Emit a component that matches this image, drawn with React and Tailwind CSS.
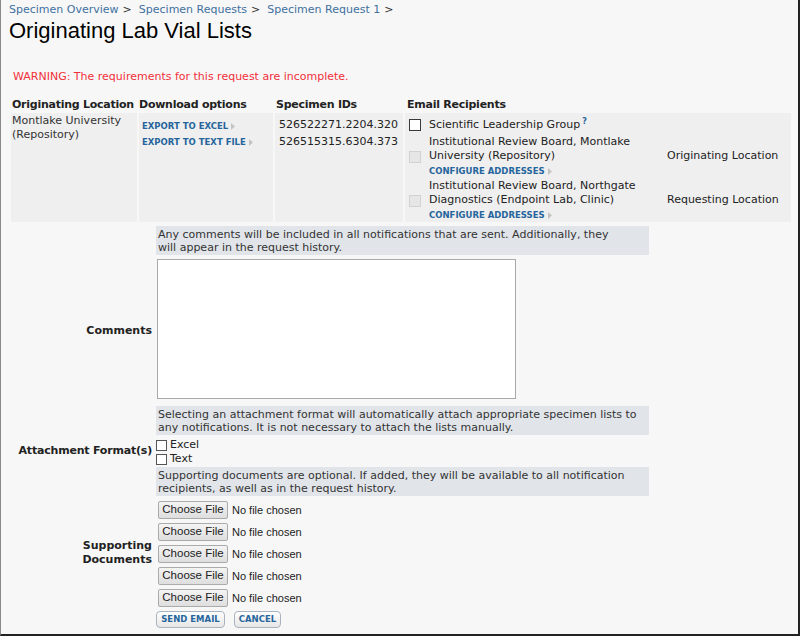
import React from "react";

const Arrow = () => (
  <svg width="4" height="7" viewBox="0 0 4 7" className="inline-block ml-[3px]">
    <path d="M0 0 L4 3.5 L0 7 Z" fill="#c4c4c4" />
  </svg>
);

const SmallLink = ({ children }) => (
  <span className="text-[8.5px] font-bold uppercase text-[#25659c] whitespace-nowrap">
    {children}
    <Arrow />
  </span>
);

const Box = ({ disabled }) => (
  <span
    className={`inline-block w-[12px] h-[12px] border ${
      disabled ? "bg-[#e6e6e6] border-[#d2d2d2]" : "bg-white border-[#3a3a3a]"
    }`}
  />
);

const Help = ({ children }) => (
  <div className="w-[493px] bg-[#e1e5e9] text-[#333] leading-[13px] pt-[2px] pb-[1px] pl-[2px] whitespace-nowrap">
    {children}
  </div>
);

const FileRow = () => (
  <div className="h-[22px] flex items-center">
    <div className="ml-[2px] w-[70px] h-[18px] flex items-center justify-center border border-[#aaa] rounded-[2px] bg-gradient-to-b from-[#f4f4f4] to-[#dedede] font-['Liberation_Sans',Arial,sans-serif] text-[11.5px] text-[#222]">
      Choose File
    </div>
    <span className="ml-[4px] font-['Liberation_Sans',Arial,sans-serif] text-[11px] text-[#222]">
      No file chosen
    </span>
  </div>
);

const Recipient = ({ lines, location, disabled, configure }) => (
  <div className="flex items-center">
    <div className="w-[24px] pl-[4px] flex items-center">
      <Box disabled={disabled} />
    </div>
    <div className="w-[238px] leading-[14px]">
      {lines.map((l, i) => (
        <div key={i} className="whitespace-nowrap">
          {l}
        </div>
      ))}
      {configure && (
        <div className="leading-[13px] mt-[1px]">
          <SmallLink>Configure Addresses</SmallLink>
        </div>
      )}
    </div>
    <div className="whitespace-nowrap">{location}</div>
  </div>
);

export default function App() {
  return (
    <div className="w-[800px] h-[636px] overflow-hidden bg-[#f7f7f7] border-l border-l-[#8a8a8a] border-r-2 border-r-[#222] border-b-2 border-b-[#222] text-[11px] text-[#222] font-['DejaVu_Sans',Verdana,sans-serif]">
      <div className="pl-[8px] pt-[3px] leading-[14px] flex whitespace-nowrap text-[#41709f]">
        <span>Specimen Overview</span>
        <span className="text-[#333] ml-[4px] mr-[7px]">&gt;</span>
        <span>Specimen Requests</span>
        <span className="text-[#333] ml-[4px] mr-[7px]">&gt;</span>
        <span>Specimen Request 1</span>
        <span className="text-[#333] ml-[4px]">&gt;</span>
      </div>
      <h1 className="pl-[8px] mt-[2px] text-[22px] leading-[24px] font-['Liberation_Sans',Arial,sans-serif] text-black">
        Originating Lab Vial Lists
      </h1>
      <div className="pl-[12px] mt-[27px] leading-[14px] text-[#f2303a]">
        WARNING: The requirements for this request are incomplete.
      </div>

      {/* request summary */}
      <div className="ml-[10px] mt-[14px] w-[780px]">
        <div className="grid grid-cols-[126px_134px_128px_386px] gap-x-[2px] font-bold leading-[14px] whitespace-nowrap tracking-[-0.25px]">
          <div className="pl-[1px]">Originating Location</div>
          <div>Download options</div>
          <div className="pl-[1px]">Specimen IDs</div>
          <div className="pl-[2px]">Email Recipients</div>
        </div>
        <div className="mt-[1px] h-[107px] grid grid-cols-[126px_134px_128px_386px] gap-x-[2px]">
          <div className="bg-[#efefef] pl-[1px] pt-[1px] leading-[14px] text-[#333]">
            Montlake University
            <br />
            (Repository)
          </div>
          <div className="bg-[#efefef] pl-[3px] pt-[5px] leading-[16px]">
            <div>
              <SmallLink>Export to Excel</SmallLink>
            </div>
            <div>
              <SmallLink>Export to Text File</SmallLink>
            </div>
          </div>
          <div className="bg-[#efefef] pl-[4px] pt-[3px] leading-[17px]">
            <div>526522271.2204.320</div>
            <div>526515315.6304.373</div>
          </div>
          <div className="bg-[#efefef] pt-[5px]">
            <Recipient
              lines={[
                <span key="a">
                  Scientific Leadership Group
                  <sup className="text-[8px] font-bold text-[#25659c] ml-[2px]">?</sup>
                </span>,
              ]}
            />
            <div className="mt-[3px]">
              <Recipient
                disabled
                configure
                lines={["Institutional Review Board, Montlake", "University (Repository)"]}
                location="Originating Location"
              />
            </div>
            <div className="mt-[1px]">
              <Recipient
                disabled
                configure
                lines={["Institutional Review Board, Northgate", "Diagnostics (Endpoint Lab, Clinic)"]}
                location="Requesting Location"
              />
            </div>
          </div>
        </div>
      </div>

      {/* notification form */}
      <div className="ml-[10px] mt-[6px] grid grid-cols-[141px_auto] gap-x-[4px]">
        <div />
        <Help>
          Any comments will be included in all notifications that are sent. Additionally, they
          <br />
          will appear in the request history.
        </Help>

        <div className="flex items-center justify-end font-bold pt-[2px]">Comments</div>
        <div className="pt-[4px] pb-[7px]">
          <div className="ml-[1px] w-[359px] h-[140px] bg-white border border-[#a9a9a9]" />
        </div>

        <div />
        <Help>
          Selecting an attachment format will automatically attach appropriate specimen lists to
          <br />
          any notifications. It is not necessary to attach the lists manually.
        </Help>

        <div className="flex items-center justify-end font-bold whitespace-nowrap tracking-[-0.2px]">
          Attachment Format(s)
        </div>
        <div className="pt-[3px] pb-[1px] leading-[14px]">
          <label className="flex items-center">
            <span className="w-[11px] h-[11px] border border-[#555] bg-white mr-[3px]" />
            Excel
          </label>
          <label className="flex items-center">
            <span className="w-[11px] h-[11px] border border-[#555] bg-white mr-[3px]" />
            Text
          </label>
        </div>

        <div />
        <Help>
          Supporting documents are optional. If added, they will be available to all notification
          <br />
          recipients, as well as in the request history.
        </Help>

        <div className="flex flex-col items-end justify-center font-bold leading-[14px]">
          <div>Supporting</div>
          <div>Documents</div>
        </div>
        <div className="pt-[3px]">
          <FileRow />
          <FileRow />
          <FileRow />
          <FileRow />
          <FileRow />
        </div>

        <div />
        <div className="mt-[2px] flex gap-[9px]">
          <button className="w-[69px] h-[17px] rounded-[4px] border border-[#a8b4c0] bg-gradient-to-b from-white to-[#e6e6e6] text-[8.5px] font-bold text-[#25659c] leading-none">
            SEND EMAIL
          </button>
          <button className="w-[47px] h-[17px] rounded-[4px] border border-[#a8b4c0] bg-gradient-to-b from-white to-[#e6e6e6] text-[8.5px] font-bold text-[#25659c] leading-none">
            CANCEL
          </button>
        </div>
      </div>
    </div>
  );
}
